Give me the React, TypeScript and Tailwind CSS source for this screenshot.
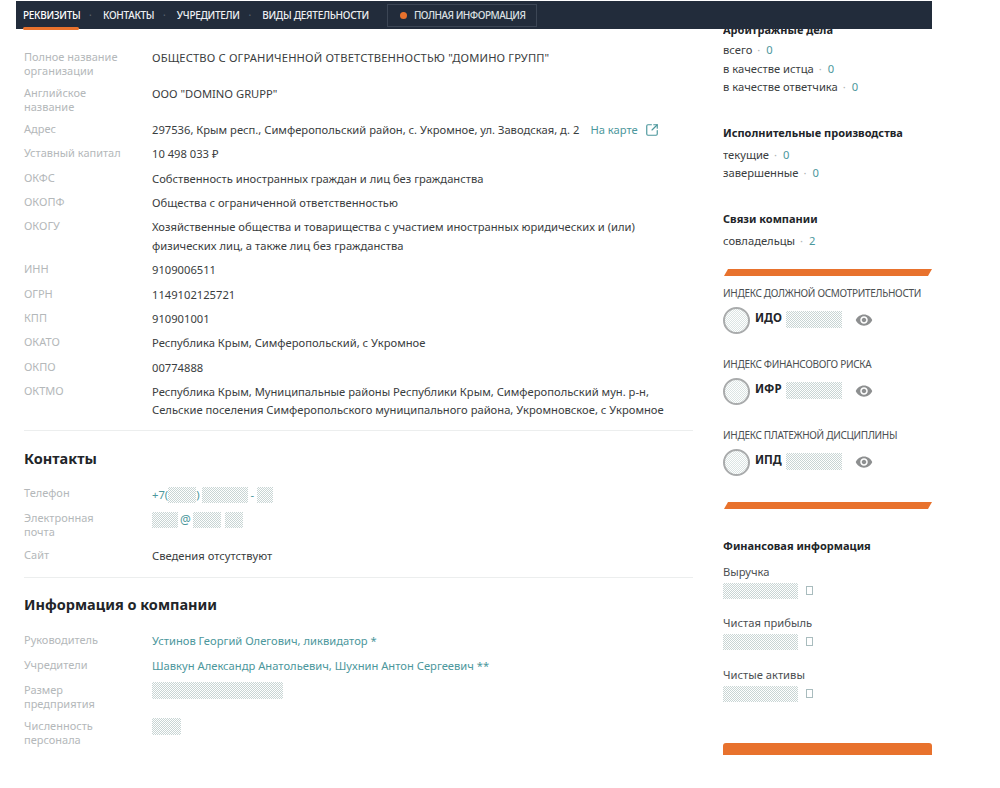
import { SquareArrowOutUpRight } from "lucide-react";
import { MdVisibility } from "react-icons/md";

type RowProps = {
    label: React.ReactNode;
    children: React.ReactNode;
    className?: string;
};

function Row({ label, children, className }: RowProps) {
    return (
        <div className={`flex ${className ?? "mb-[6.3px]"}`}>
            <div className="w-[128px] shrink-0 pt-px text-[11px] leading-[14px] text-[#b4b8ba]">{label}</div>
            <div className="leading-[18px] text-[#3a3d40]">{children}</div>
        </div>
    );
}

function Mask({ className }: { className: string }) {
    return (
        <span className={`inline-block bg-[image:repeating-conic-gradient(#c8d5d4_0_25%,#ffffff_0_50%)] bg-[length:2px_2px] ${className}`} />
    );
}

function Stat({ label, value }: { label: string; value: string }) {
    return (
        <div className="flex h-[18.5px] items-center">
            <span>{label}</span>
            <span className="ml-[5px] text-[#b0b4b6]">·</span>
            <span className="ml-[6px] text-[#4c979c]">{value}</span>
        </div>
    );
}

function Slash({ className }: { className: string }) {
    return <div className={`ml-[3px] h-[7px] w-[204px] -skew-x-[30deg] bg-[#e8722d] ${className}`} />;
}

function IndexBlock({ title, code, className }: { title: string; code: string; className: string }) {
    return (
        <div className={className}>
            <div className="text-[10px] leading-[16px] tracking-[-0.3px] whitespace-nowrap text-[#4b4f52]">{title}</div>
            <div className="mt-[5.5px] flex h-[28px] items-center">
                <span className="size-[27px] rounded-full border-2 border-[#a9abac] bg-[image:repeating-conic-gradient(#dbe4e3_0_25%,#ffffff_0_50%)] bg-[length:2px_2px]" />
                <span className="ml-[5px] -mt-[5px] w-[31px] text-[11.5px] font-bold text-[#222529]">{code}</span>
                <Mask className="-mt-[3px] h-[17px] w-[56px]" />
                <MdVisibility className="-mt-[2px] ml-[13px] size-[18px] text-[#8d8f90]" />
            </div>
        </div>
    );
}

function Money({ label, className }: { label: string; className: string }) {
    return (
        <div className={className}>
            <div className="leading-[16px] text-[#4b4f52]">{label}</div>
            <div className="mt-[3px] flex items-center">
                <Mask className="h-[16px] w-[75px]" />
                <span className="ml-[8px] h-[9px] w-[7px] border border-[#a9bcbe]" />
            </div>
        </div>
    );
}

export default function App() {
    const navItems = ["КОНТАКТЫ", "УЧРЕДИТЕЛИ", "ВИДЫ ДЕЯТЕЛЬНОСТИ"];

    return (
        <div className="h-[788px] w-[1000px] overflow-hidden bg-white pt-px font-['Noto_Sans',sans-serif] text-[11.2px] text-[#3a3d40]">
            <nav className="relative z-10 ml-4 flex h-[28px] w-[916px] items-center bg-[#222c3b] pl-[7px] text-[10px] font-medium tracking-[-0.3px] text-[#eef0f2]">
                <div className="relative flex h-full w-[56px] items-center whitespace-nowrap text-white">
                    РЕКВИЗИТЫ
                    <span className="absolute -bottom-px left-0 h-[3px] w-[56px] rounded-sm bg-[#e8722d]" />
                </div>
                <span className="ml-[10px] w-[14px] text-[#59636f]">·</span>
                {navItems.map((item, index) => (
                    <div key={item} className="flex items-center whitespace-nowrap">
                        {item}
                        {index < 2 && <span className="mx-[8.8px] w-[5px] text-[#59636f]">·</span>}
                    </div>
                ))}
                <div className="ml-[18px] flex h-[23px] w-[150px] items-center border border-[#3c4655] pl-[12px] tracking-[-0.5px] text-[#dde0e3]">
                    <span className="mr-[7px] size-[7px] rounded-full bg-[#e8722d]" />
                    ПОЛНАЯ ИНФОРМАЦИЯ
                </div>
            </nav>

            <div className="ml-6 flex">
                <main className="w-[669px] pt-[20px]">
                    <Row label={<>Полное название<br />организации</>} className="mb-[7px]">
                        <span className="tracking-[0.15px]">ОБЩЕСТВО С ОГРАНИЧЕННОЙ ОТВЕТСТВЕННОСТЬЮ "ДОМИНО ГРУПП"</span>
                    </Row>
                    <Row label={<>Английское<br />название</>} className="mb-[7px]">ООО "DOMINO GRUPP"</Row>
                    <Row label="Адрес">
                        <div className="flex items-center">
                            297536, Крым респ., Симферопольский район, с. Укромное, ул. Заводская, д. 2
                            <span className="ml-[11px] text-[#4c979c]">На карте</span>
                            <SquareArrowOutUpRight className="ml-[7px] size-[14px] text-[#4c979c]" />
                        </div>
                    </Row>
                    <Row label="Уставный капитал">10 498 033 ₽</Row>
                    <Row label="ОКФС">Собственность иностранных граждан и лиц без гражданства</Row>
                    <Row label="ОКОПФ">Общества с ограниченной ответственностью</Row>
                    <Row label="ОКОГУ">
                        <p className="leading-[18.5px]">Хозяйственные общества и товарищества с участием иностранных юридических и (или)<br />физических лиц, а также лиц без гражданства</p>
                    </Row>
                    <Row label="ИНН">9109006511</Row>
                    <Row label="ОГРН">1149102125721</Row>
                    <Row label="КПП">910901001</Row>
                    <Row label="ОКАТО">Республика Крым, Симферопольский, с Укромное</Row>
                    <Row label="ОКПО">00774888</Row>
                    <Row label="ОКТМО" className="mb-0">
                        <p className="leading-[18.5px]">Республика Крым, Муниципальные районы Республики Крым, Симферопольский мун. р-н,<br />Сельские поселения Симферопольского муниципального района, Укромновское, с Укромное</p>
                    </Row>

                    <hr className="mt-[10px] border-[#eceeee]" />
                    <h2 className="mt-[17px] mb-[17px] text-[14.5px] leading-[20px] font-bold text-[#222529]">Контакты</h2>

                    <Row label="Телефон" className="mb-[6px]">
                        <div className="mt-[2px] flex h-[17px] items-center text-[#4c979c]">
                            +7(<Mask className="h-[16px] w-[28px]" />)<Mask className="ml-[2px] h-[16px] w-[46px]" /><span className="mx-[3px]">-</span><Mask className="h-[16px] w-[16px]" />
                        </div>
                    </Row>
                    <Row label={<>Электронная<br />почта</>} className="mb-[8px]">
                        <div className="mt-[2px] flex h-[17px] items-center text-[#4c979c]">
                            <Mask className="h-[16px] w-[26px]" /><span className="mx-[2px] text-[12px]">@</span><Mask className="h-[16px] w-[28px]" /><Mask className="ml-[4px] h-[16px] w-[18px]" />
                        </div>
                    </Row>
                    <Row label="Сайт" className="mb-0">Сведения отсутствуют</Row>

                    <hr className="mt-[12px] border-[#eceeee]" />
                    <h2 className="mt-[16px] mb-[18px] text-[14.5px] leading-[20px] font-bold text-[#222529]">Информация о компании</h2>

                    <Row label="Руководитель" className="mb-[6.8px]"><span className="text-[#4c979c]">Устинов Георгий Олегович, ликвидатор *</span></Row>
                    <Row label="Учредители" className="mb-[6.8px]"><span className="text-[#4c979c]">Шавкун Александр Анатольевич, Шухнин Антон Сергеевич **</span></Row>
                    <Row label={<>Размер<br />предприятия</>} className="mb-[7px]"><Mask className="block h-[17px] w-[131px]" /></Row>
                    <Row label={<>Численность<br />персонала</>} className="mb-0"><Mask className="block h-[17px] w-[29px]" /></Row>
                </main>

                <aside className="ml-[30px] h-[726px] w-[209px] overflow-hidden">
                    <h3 className="-mt-[9px] mb-[1.5px] text-[11px] leading-[20px] font-bold text-[#222529]">Арбитражные дела</h3>
                    <Stat label="всего" value="0" />
                    <Stat label="в качестве истца" value="0" />
                    <Stat label="в качестве ответчика" value="0" />

                    <h3 className="mt-[26px] mb-[3px] text-[11px] leading-[20px] font-bold text-[#222529]">Исполнительные производства</h3>
                    <Stat label="текущие" value="0" />
                    <Stat label="завершенные" value="0" />

                    <h3 className="mt-[26px] mb-[3px] text-[11px] leading-[20px] font-bold text-[#222529]">Связи компании</h3>
                    <Stat label="совладельцы" value="2" />

                    <Slash className="mt-[18.5px]" />
                    <IndexBlock title="ИНДЕКС ДОЛЖНОЙ ОСМОТРИТЕЛЬНОСТИ" code="ИДО" className="mt-[9px]" />
                    <IndexBlock title="ИНДЕКС ФИНАНСОВОГО РИСКА" code="ИФР" className="mt-[21.5px]" />
                    <IndexBlock title="ИНДЕКС ПЛАТЕЖНОЙ ДИСЦИПЛИНЫ" code="ИПД" className="mt-[21.5px]" />
                    <Slash className="mt-[25.5px]" />

                    <h3 className="mt-[26.5px] text-[11px] leading-[20px] font-bold text-[#222529]">Финансовая информация</h3>
                    <Money label="Выручка" className="mt-[8px]" />
                    <Money label="Чистая прибыль" className="mt-[16px]" />
                    <Money label="Чистые активы" className="mt-[17px]" />

                    <div className="mt-[41px] h-[12px] rounded-t-[3px] bg-[#e8722d]" />
                </aside>
            </div>
        </div>
    );
}
